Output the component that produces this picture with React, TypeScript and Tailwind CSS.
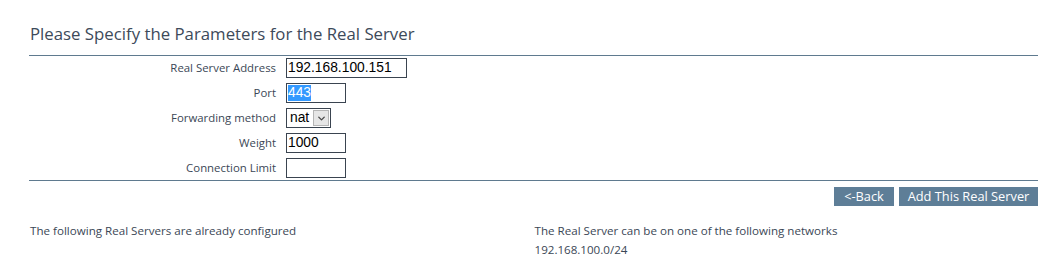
import { ChevronDown } from 'lucide-react';

const FONT = "font-['Open_Sans','Noto_Sans',sans-serif]";
const INPUT_FONT = "font-['Liberation_Sans',Arial,sans-serif]";

function FieldRow({ label, children }: { label: string; children: React.ReactNode }) {
  return (
    <div className="flex h-[20px] items-center">
      <div className="w-[257px] pr-[10px] text-right text-[11.4px] text-[#3b4756]">{label}</div>
      {children}
    </div>
  );
}

function TextBox({ width, value, selected }: { width: string; value?: string; selected?: boolean }) {
  return (
    <div
      className={`${width} ${INPUT_FONT} flex h-[20px] items-center border border-[#3a4450] bg-white px-[1px] text-[13.8px] text-black`}
    >
      {value && (selected ? <span className="bg-[#3399ff] leading-[16px] text-white">{value}</span> : <span>{value}</span>)}
    </div>
  );
}

export default function App() {
  return (
    <div className={`${FONT} w-[1064px] h-[271px] bg-white px-[29px] pt-[24px]`}>
      {/* Heading */}
      <h2 className="pl-[1px] text-[16.8px] leading-[20px] text-[#3d4a5a]">
        Please Specify the Parameters for the Real Server
      </h2>

      <div className="mt-[11px] w-[1009px] border-t border-[#5f7a8f]" />

      {/* Form */}
      <div className="flex flex-col gap-[5px] pt-[2px] pb-[2px]">
        <FieldRow label="Real Server Address">
          <TextBox width="w-[121px]" value="192.168.100.151" />
        </FieldRow>
        <FieldRow label="Port">
          <TextBox width="w-[60px]" value="443" selected />
        </FieldRow>
        <FieldRow label="Forwarding method">
          <div className={`${INPUT_FONT} flex h-[20px] w-[45px] items-stretch border border-[#3a4450] bg-white text-[13.8px] text-black`}>
            <span className="flex-1 pl-[3px] leading-[18px]">nat</span>
            <span className="my-[1px] mr-[1px] flex w-[16px] items-center justify-center border border-[#b5b5b5] bg-[#e6e6e6]">
              <ChevronDown size={11} strokeWidth={3} className="text-[#4a4a4a]" />
            </span>
          </div>
        </FieldRow>
        <FieldRow label="Weight">
          <TextBox width="w-[60px]" value="1000" />
        </FieldRow>
        <FieldRow label="Connection Limit">
          <TextBox width="w-[60px]" />
        </FieldRow>
      </div>

      <div className="w-[1009px] border-t border-[#5f7a8f]" />

      {/* Actions */}
      <div className="flex w-[1009px] justify-end gap-[5px] pt-[6px]">
        <button className="h-[19px] w-[60px] bg-[#5e7e97] text-[12.8px] leading-[19px] text-white">&lt;-Back</button>
        <button className="h-[19px] w-[139px] bg-[#5e7e97] text-[12.8px] leading-[19px] text-white">
          Add This Real Server
        </button>
      </div>

      {/* Info */}
      <div className="mt-[15px] grid w-[1009px] grid-cols-2 text-[11.6px] leading-[19px] text-[#3b4756]">
        <div className="pl-[1px]">The following Real Servers are already configured</div>
        <div className="pl-[1px]">
          <div>The Real Server can be on one of the following networks</div>
          <div>192.168.100.0/24</div>
        </div>
      </div>
    </div>
  );
}
